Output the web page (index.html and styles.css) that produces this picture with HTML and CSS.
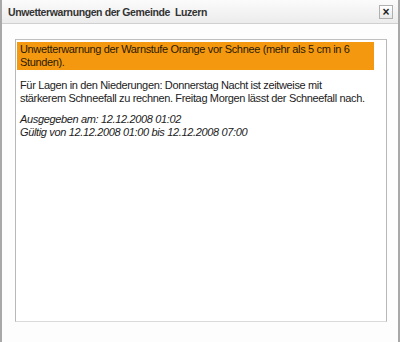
FILE: index.html
```html
<!DOCTYPE html>
<html>
<head>
<meta charset="utf-8">
<link rel="stylesheet" href="styles.css">
</head>
<body>
<div class="window">
  <div class="titlebar">
    <span class="title">Unwetterwarnungen der Gemeinde&nbsp; Luzern</span>
    <span class="close">×</span>
  </div>
  <div class="body">
    <div class="panel">
      <div class="warn">Unwetterwarnung der Warnstufe Orange vor Schnee (mehr als 5 cm in 6<br>Stunden).</div>
      <p class="desc">Für Lagen in den Niederungen: Donnerstag Nacht ist zeitweise mit<br>stärkerem Schneefall zu rechnen. Freitag Morgen lässt der Schneefall nach.</p>
      <p class="meta">Ausgegeben am: 12.12.2008 01:02<br>Gültig von 12.12.2008 01:00 bis 12.12.2008 07:00</p>
    </div>
  </div>
</div>
</body>
</html>
```

FILE: styles.css
```css
html, body {
  margin: 0;
  padding: 0;
  background: #ffffff;
}
.window {
  width: 400px;
  height: 342px;
  box-sizing: border-box;
  border-left: 2px solid #a8a8a8;
  border-right: 2px solid #a8a8a8;
  display: flex;
  flex-direction: column;
  font-family: "Liberation Sans", Arial, sans-serif;
  color: #222;
}
.titlebar {
  height: 24px;
  box-sizing: border-box;
  border-bottom: 1px solid #d0d0d0;
  background: linear-gradient(#fbfbfb, #ececec);
  display: flex;
  align-items: center;
  justify-content: space-between;
  padding: 0 5px 0 6px;
}
.title {
  font-size: 10.5px;
  font-weight: bold;
  letter-spacing: -0.4px;
  color: #333;
}
.close {
  width: 14px;
  height: 14px;
  box-sizing: border-box;
  border: 1px solid #b0b0b0;
  background: linear-gradient(#ffffff, #e8e8e8);
  display: flex;
  align-items: center;
  justify-content: center;
  font-size: 12px;
  font-weight: bold;
  line-height: 1;
  color: #222;
}
.body {
  flex: 1;
  padding: 15px 11px 20px 13px;
  background: #fdfdfd;
  display: flex;
}
.panel {
  flex: 1;
  border: 1px solid #b8b8b8;
  border-bottom-color: #dadada;
  border-top-color: #c0c0c0;
  background: #fff;
  padding: 2px 12px 0 1px;
}
.warn {
  background: #f4980f;
  color: #2a1a00;
  font-size: 11px;
  line-height: 13px;
  letter-spacing: -0.35px;
  padding: 1px 3px;
}
.desc, .meta {
  font-size: 11px;
  line-height: 13px;
  letter-spacing: -0.35px;
  margin: 9px 0 0 3px;
  color: #222;
}
.meta {
  font-style: italic;
  margin-top: 8px;
}
```
